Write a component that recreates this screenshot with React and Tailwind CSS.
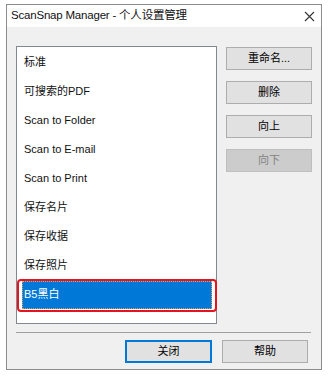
import React from 'react'

const items = [
  '标准',
  '可搜索的PDF',
  'Scan to Folder',
  'Scan to E-mail',
  'Scan to Print',
  '保存名片',
  '保存收据',
  '保存照片',
  'B5黑白',
]

function Btn({ children, disabled, focused, className = '' }) {
  return (
    <div
      className={
        'h-[23px] flex items-center justify-center border text-[11px] ' +
        (disabled
          ? 'bg-[#cccccc] border-[#bfbfbf] text-[#838383] '
          : focused
          ? 'bg-[#e1e1e1] border-[#0078d7] border-2 text-black '
          : 'bg-[#e1e1e1] border-[#adadad] text-black ') +
        className
      }
    >
      {children}
    </div>
  )
}

export default function App() {
  return (
    <div
      className="w-[329px] h-[376px] bg-white pt-[4px] pl-[6px]"
      style={{ fontFamily: '"Liberation Sans", "Noto Sans CJK SC", sans-serif' }}
    >
      <div className="w-[316px] h-[366px] border border-[#8c8c8c] flex flex-col">
        {/* Title bar */}
        <div className="h-[22px] bg-white flex items-center justify-between pl-[4px] pr-[6px]">
          <span className="text-[11.5px] tracking-[-0.2px] text-[#111]">ScanSnap Manager - 个人设置管理</span>
          <svg width="11" height="11" viewBox="0 0 11 11">
            <path d="M1 1 L10 10 M10 1 L1 10" stroke="#333" strokeWidth="1.1" />
          </svg>
        </div>

        {/* Body */}
        <div className="flex-1 bg-[#f0f0f0] px-[9px] pt-[19px]">
          <div className="flex">
            {/* List */}
            <div className="relative w-[201px] h-[278px] border border-[#828790] bg-white pt-[1px]">
              {items.map((it, i) => {
                const sel = i === items.length - 1
                return (
                  <div key={it} className="relative h-[29px] px-[4px] pl-[5px] flex items-center">
                    {sel ? (
                      <>
                        <div className="w-full h-[28px] bg-[#0078d7] border border-dotted border-[#e0a060] flex items-center pl-[1px] text-[11px] text-white">
                          {it}
                        </div>
                        <div className="absolute left-[0px] -right-[1px] -top-[1px] h-[33px] border-2 border-[#e5141e] rounded-[4px]" />
                      </>
                    ) : (
                      <span className="pl-[2px] text-[11px] text-[#111]">{it}</span>
                    )}
                  </div>
                )
              })}
            </div>

            {/* Side buttons */}
            <div className="ml-[9px] pt-[1px] flex flex-col gap-[11px] w-[86px]">
              <Btn>重命名...</Btn>
              <Btn>删除</Btn>
              <Btn>向上</Btn>
              <Btn disabled>向下</Btn>
            </div>
          </div>

          {/* Separator */}
          <div className="mt-[8px] w-[295px] h-[1px] bg-[#a0a0a0]" />

          {/* Bottom buttons */}
          <div className="mt-[7px] flex justify-end gap-[10px] pr-[4px]">
            <Btn focused className="w-[87px]">关闭</Btn>
            <Btn className="w-[86px]">帮助</Btn>
          </div>
        </div>
      </div>
    </div>
  )
}
